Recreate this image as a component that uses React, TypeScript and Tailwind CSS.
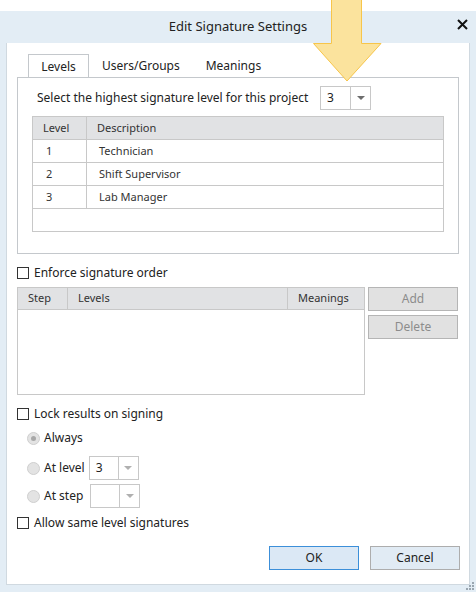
import React from 'react';

const font = { fontFamily: '"Noto Sans", "Open Sans", sans-serif' };

const Checkbox = ({ label }: { label: string }) => (
  <div className="flex items-center gap-[5px] h-[13px]">
    <div className="w-[12px] h-[12px] border border-[#333] bg-white" />
    <span className="text-[12px] text-[#222] leading-none">{label}</span>
  </div>
);

const Radio = ({ checked }: { checked?: boolean }) => (
  <div className="w-[13px] h-[13px] rounded-full border border-[#cfcfcf] bg-[#e3e3e3] flex items-center justify-center">
    {checked && <div className="w-[5px] h-[5px] rounded-full bg-[#a8a8a8]" />}
  </div>
);

const Caret = ({ color = '#6d6d6d' }: { color?: string }) => (
  <svg width="8" height="4" viewBox="0 0 8 4">
    <path d="M0 0 L8 0 L4 4 Z" fill={color} />
  </svg>
);

const Combo = ({ value, w, h, caret }: { value: string; w: string; h: string; caret?: string }) => (
  <div className={`flex border border-[#c8c8c8] bg-white ${w} ${h}`}>
    <div className="flex-1 flex items-center pl-[6px] text-[12px] text-[#222]">{value}</div>
    <div className="w-[20px] border-l border-[#c8c8c8] flex items-center justify-center">
      <Caret color={caret} />
    </div>
  </div>
);

const levels = [
  ['1', 'Technician'],
  ['2', 'Shift Supervisor'],
  ['3', 'Lab Manager'],
];

export default function App() {
  return (
    <div className="relative w-[476px] h-[592px] bg-white overflow-hidden" style={font}>
      <div className="mt-[11px] h-[581px] bg-[#e3edf5] flex flex-col">
        {/* title bar */}
        <div className="h-[32px] relative flex items-center justify-center">
          <span className="text-[13px] text-[#222]">Edit Signature Settings</span>
          <svg className="absolute right-[8px] top-[8px]" width="11" height="11" viewBox="0 0 11 11">
            <path d="M1 1 L10 10 M10 1 L1 10" stroke="#111" strokeWidth="2" />
          </svg>
        </div>

        {/* body */}
        <div className="mx-[6px] h-[542px] bg-white border-l border-r border-b border-[#d0d9e0] pl-[10px] pr-[8px] pt-[12px] relative">
          {/* tabs */}
          <div className="flex items-end h-[22px] text-[12px] text-[#222]">
            <div className="ml-[11px] w-[61px] h-[23px] border border-b-0 border-[#c4c8cc] bg-white relative z-10 flex items-center justify-center pt-[2px]">
              Levels
            </div>
            <div className="ml-[13px] h-[22px] flex items-center">Users/Groups</div>
            <div className="ml-[26px] h-[22px] flex items-center">Meanings</div>
          </div>
          <div className="w-[442px] h-[177px] border border-[#c4c8cc] px-[14px] pt-[8px]">
            <div className="flex items-center h-[24px]">
              <span className="ml-[5px] text-[12px] text-[#222] w-[283px]">Select the highest signature level for this project</span>
              <Combo value="3" w="w-[51px]" h="h-[24px]" />
            </div>
            <div className="mt-[6px] w-[412px] h-[116px] border border-[#c8c8c8] text-[11px] text-[#333]">
              <div className="flex h-[23px] bg-[#e1e2e4] border-b border-[#c8c8c8]">
                <div className="w-[54px] border-r border-[#c8c8c8] flex items-center pl-[10px]">Level</div>
                <div className="flex-1 flex items-center pl-[10px]">Description</div>
              </div>
              {levels.map(([n, d]) => (
                <div key={n} className="flex h-[23px] border-b border-[#c8c8c8]">
                  <div className="w-[54px] border-r border-[#c8c8c8] flex items-center pl-[13px]">{n}</div>
                  <div className="flex-1 flex items-center pl-[12px]">{d}</div>
                </div>
              ))}
            </div>
          </div>

          {/* enforce signature order */}
          <div className="mt-[12px]">
            <Checkbox label="Enforce signature order" />
          </div>
          <div className="mt-[8px] flex gap-[3px]">
            <div className="w-[348px] h-[108px] border border-[#c8c8c8] text-[11px] text-[#333]">
              <div className="flex h-[22px] bg-[#e1e2e4] border-b border-[#c8c8c8]">
                <div className="w-[50px] border-r border-[#c8c8c8] flex items-center pl-[10px]">Step</div>
                <div className="w-[220px] border-r border-[#c8c8c8] flex items-center pl-[10px]">Levels</div>
                <div className="flex-1 flex items-center pl-[10px]">Meanings</div>
              </div>
            </div>
            <div className="flex flex-col gap-[4px]">
              <div className="w-[90px] h-[24px] bg-[#e1e1e1] border border-[#b5b5b5] flex items-center justify-center text-[12px] text-[#8c8c8c]">Add</div>
              <div className="w-[90px] h-[24px] bg-[#e1e1e1] border border-[#b5b5b5] flex items-center justify-center text-[12px] text-[#8c8c8c]">Delete</div>
            </div>
          </div>

          {/* lock results */}
          <div className="mt-[12px]">
            <Checkbox label="Lock results on signing" />
          </div>
          <div className="ml-[10px] mt-[11px] flex flex-col text-[12px] text-[#222]">
            <div className="flex items-center gap-[4px] h-[14px]">
              <Radio checked />
              <span>Always</span>
            </div>
            <div className="flex items-center gap-[4px] mt-[11px]">
              <Radio />
              <span>At level</span>
              <div className="ml-[0px]">
                <Combo value="3" w="w-[50px]" h="h-[24px]" caret="#b0b0b0" />
              </div>
            </div>
            <div className="flex items-center gap-[4px] mt-[4px]">
              <Radio />
              <span>At step</span>
              <div className="ml-[3px]">
                <Combo value="" w="w-[50px]" h="h-[24px]" caret="#b0b0b0" />
              </div>
            </div>
          </div>
          <div className="mt-[8px]">
            <Checkbox label="Allow same level signatures" />
          </div>

          {/* buttons */}
          <div className="mt-[17px] flex justify-end gap-[11px] pr-[1px]">
            <div className="w-[90px] h-[24px] bg-[#dbe8f5] border border-[#3c8fd9] flex items-center justify-center text-[12px] text-[#222]">OK</div>
            <div className="w-[90px] h-[24px] bg-[#e1ebf4] border border-[#adadad] flex items-center justify-center text-[12px] text-[#222]">Cancel</div>
          </div>
        </div>
      </div>

      {/* resize grip */}
      <svg className="absolute right-[2px] bottom-[2px]" width="8" height="8" viewBox="0 0 8 8">
        {[[6, 0], [3, 3], [6, 3], [0, 6], [3, 6], [6, 6]].map(([x, y], i) => (
          <rect key={i} x={x} y={y} width="2" height="2" fill="#9aa6b0" />
        ))}
      </svg>

      {/* highlight arrow */}
      <svg className="absolute left-[313px] top-0" width="69" height="83" viewBox="0 0 69 83">
        <path d="M18.5 -1 L48.5 -1 L48.5 43.5 L68 43.5 L34 81 L0.5 43.5 L18.5 43.5 Z" fill="#fbe39d" stroke="#f7c54a" strokeWidth="1" />
      </svg>
    </div>
  );
}
